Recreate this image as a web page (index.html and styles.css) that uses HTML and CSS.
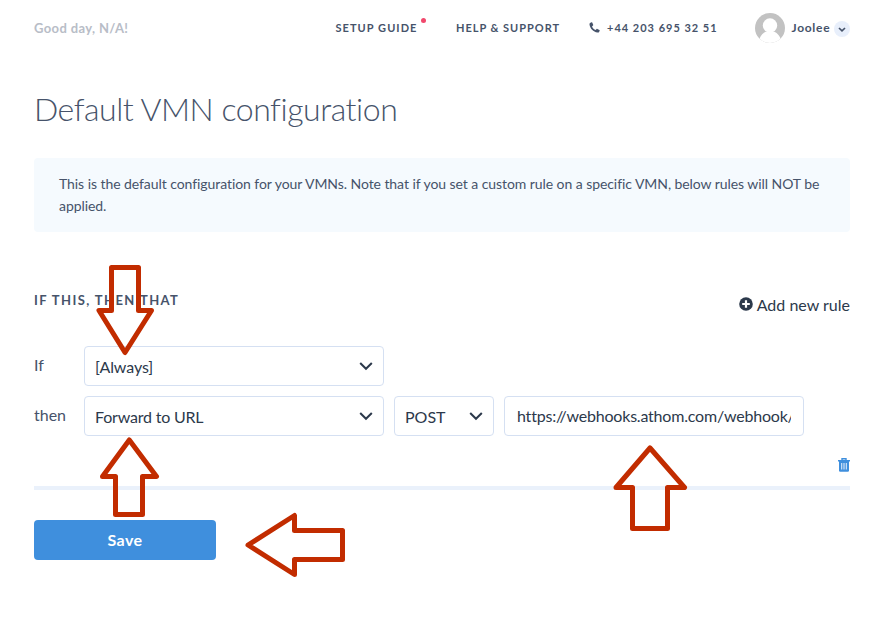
FILE: index.html
```html
<!DOCTYPE html>
<html lang="en">
<head>
<meta charset="utf-8">
<title>Default VMN configuration</title>
<link rel="stylesheet" href="styles.css">
</head>
<body>
<header class="topbar">
  <span class="greeting">Good day, N/A!</span>
  <nav class="nav">
    <a class="nav-link guide">SETUP GUIDE<i class="dot"></i></a>
    <a class="nav-link help">HELP &amp; SUPPORT</a>
    <a class="nav-link phone">
      <svg width="11" height="11" viewBox="0 0 11 11"><path d="M2.5.3 1 .9C.5 1.200.4 1.800.5 2.500 1 6.500 4.300 10 8.500 10.500c.7.1 1.300 0 1.600-.5l.6-1.500c.1-.3 0-.5-.3-.6L8.300 6.900c-.3-.1-.5-.1-.7.2l-.9 1C5 7.300 3.800 6 3 4.400l1-.9c.2-.2.3-.4.2-.7L3.200.6C3.100.3 2.800.2 2.500.3z"/></svg>
      <span class="phone-number">+44 203 695 32 51</span>
    </a>
  </nav>
  <div class="user">
    <svg class="avatar" width="30" height="30" viewBox="0 0 30 30"><defs><clipPath id="c"><circle cx="15" cy="15" r="15"/></clipPath></defs><g clip-path="url(#c)"><path fill="#c2c2c2" d="M0 0h30v30H0z"/><circle cx="15" cy="12.500" r="7.200" fill="#fff"/><path fill="#fff" d="M3.500 30C4 24 7.500 20.200 11 18.600h8c3.500 1.600 7 5.400 7.500 11.400z"/></g></svg>
    <span class="user-name">Joolee</span>
    <svg class="user-caret" width="16" height="16" viewBox="0 0 16 16"><circle cx="8" cy="8" r="8" fill="#e8effb"/><path d="M5 7l3 2.800L11 7" fill="none" stroke="#46536a" stroke-width="1.700"/></svg>
  </div>
</header>
<main>
  <h1>Default VMN configuration</h1>
  <p class="notice"><span>This is the default configuration for your VMNs. Note that if you set a custom rule on a specific VMN, below rules will NOT be</span> <span>applied.</span></p>
  <div class="section-head">
    <h2>IF THIS, THEN THAT</h2>
    <a class="add"><svg width="14" height="14" viewBox="0 0 14 14"><circle cx="7" cy="7" r="6.800" fill="#2c394b"/><path d="M7 3.200v7.600M3.200 7h7.600" stroke="#fff" stroke-width="2.200"/></svg><span>Add new rule</span></a>
  </div>
  <div class="row">
    <label>If</label>
    <div class="select wide"><span class="always">[Always]</span><svg width="14" height="10" viewBox="0 0 14 10"><path d="M1.200 2 7 7.800 12.800 2"/></svg></div>
  </div>
  <div class="row">
    <label>then</label>
    <div class="select wide"><span class="forward">Forward to URL</span><svg width="14" height="10" viewBox="0 0 14 10"><path d="M1.200 2 7 7.800 12.800 2"/></svg></div>
    <div class="select method"><span>POST</span><svg width="14" height="10" viewBox="0 0 14 10"><path d="M1.200 2 7 7.800 12.800 2"/></svg></div>
    <div class="input"><span class="url">https://webhooks.athom.com/webhook/</span></div>
  </div>
  <div class="rule-footer">
    <svg width="12" height="14" viewBox="0 0 12 14"><path d="M4 2V.8h4V2M0 2.700h12" fill="none" stroke="#3f8fdd" stroke-width="1.400"/><path d="M1 3h10v9.500q0 1.200-1.200 1.200H2.200Q1 13.700 1 12.500z" fill="#3f8fdd"/><path d="M3.700 5v6.500M6 5v6.500M8.300 5v6.500" stroke="#dceaf9" stroke-width="1.100"/></svg>
  </div>
  <button class="save"><span>Save</span></button>
</main>
<svg class="arrows" width="878" height="629" viewBox="0 0 878 629">
  <path d="M111.500 267.500H138.500V310.500H151.500L125 352.500 99 310.500H111.500Z"/>
  <path d="M115.500 514.500V476.500H102.500L129.300 440 156.500 476.500H142.500V514.500Z"/>
  <path d="M342.500 530.500V559.500H294.500V574.500L248 545 294.500 515.500V530.500Z"/>
  <path d="M632.500 528.500V487.500H616L650 448 684.500 487.500H667.500V528.500Z"/>
</svg>
</body>
</html>
```
FILE: styles.css
```css
* { box-sizing: border-box; }
body {
  margin: 0;
  width: 878px;
  height: 629px;
  overflow: hidden;
  padding: 0 28px 0 34px;
  background: #fff;
  color: #46536a;
  font-family: Lato, "Open Sans", sans-serif;
  font-size: 16px;
}
.topbar { display: flex; align-items: center; height: 56px; white-space: nowrap; }
.greeting { width: 301.500px; color: #b8bdc7; font-size: 13px; font-weight: 700; letter-spacing: .37px; }
.nav { display: flex; align-items: center; width: 419px; margin-top: -1px; font-size: 11px; font-weight: 700; }
.nav-link { position: relative; display: flex; align-items: center; }
.guide { width: 120.500px; letter-spacing: 1.050px; }
.help { width: 133px; letter-spacing: .97px; }
.dot { position: absolute; left: 85.500px; top: -3px; width: 5px; height: 5px; border-radius: 50%; background: #f1486c; }
.phone svg { fill: #46536a; margin-right: 7px; }
.phone-number { letter-spacing: 1px; }
.user { display: flex; align-items: center; }
.avatar { margin-right: 7px; }
.user-name { width: 42px; margin-top: -1px; font-size: 12px; font-weight: 700; letter-spacing: .7px; }
.user-caret { margin-top: 2px; }
h1 { margin: 31px 0 0; height: 45px; line-height: 44px; font-size: 32px; font-weight: 300; letter-spacing: -.46px; white-space: nowrap; }
.notice {
  margin: 26px 0 0; height: 74px; padding: 15px 25px;
  border-radius: 4px; background: #f5fafe;
  font-size: 14px; line-height: 22px; letter-spacing: -.067px;
}
.notice span { display: block; white-space: nowrap; }
.section-head { display: flex; justify-content: space-between; height: 114px; padding-top: 59px; white-space: nowrap; }
h2 { margin: 0; font-size: 13px; line-height: 18px; font-weight: 700; letter-spacing: 1.400px; }
.add { display: flex; align-items: center; gap: 4px; height: 26px; color: #2c394b; }
.row { display: flex; gap: 10px; margin-bottom: 10px; height: 40px; }
.row label { width: 40px; line-height: 38px; }
.select, .input { border: 1px solid #d5e0f2; border-radius: 4px; height: 40px; color: #2c394b; line-height: 37px; white-space: nowrap; }
.select { display: flex; justify-content: space-between; align-items: center; padding: 0 10px; }
.select svg { fill: none; stroke: #2c394b; stroke-width: 2; }
.always { letter-spacing: -.1px; }
.forward { letter-spacing: -.2px; }
.wide { width: 300px; }
.method { width: 100px; }
.input { width: 300px; padding: 0 12px; }
.url { display: block; overflow: hidden; letter-spacing: -.2px; }
.rule-footer { display: flex; justify-content: flex-end; height: 44px; padding-top: 12px; border-bottom: 4px solid #eaf1fb; }
.save { display: block; width: 182px; height: 40px; margin-top: 30px; padding: 0 0 2px; border: 0; border-radius: 4px; background: #3f8fdd; color: #fff; font: 700 16px Lato, sans-serif; letter-spacing: .4px; }
.arrows { position: absolute; left: 0; top: 0; fill: none; stroke: #c22c00; stroke-width: 5; stroke-linejoin: round; }
```
